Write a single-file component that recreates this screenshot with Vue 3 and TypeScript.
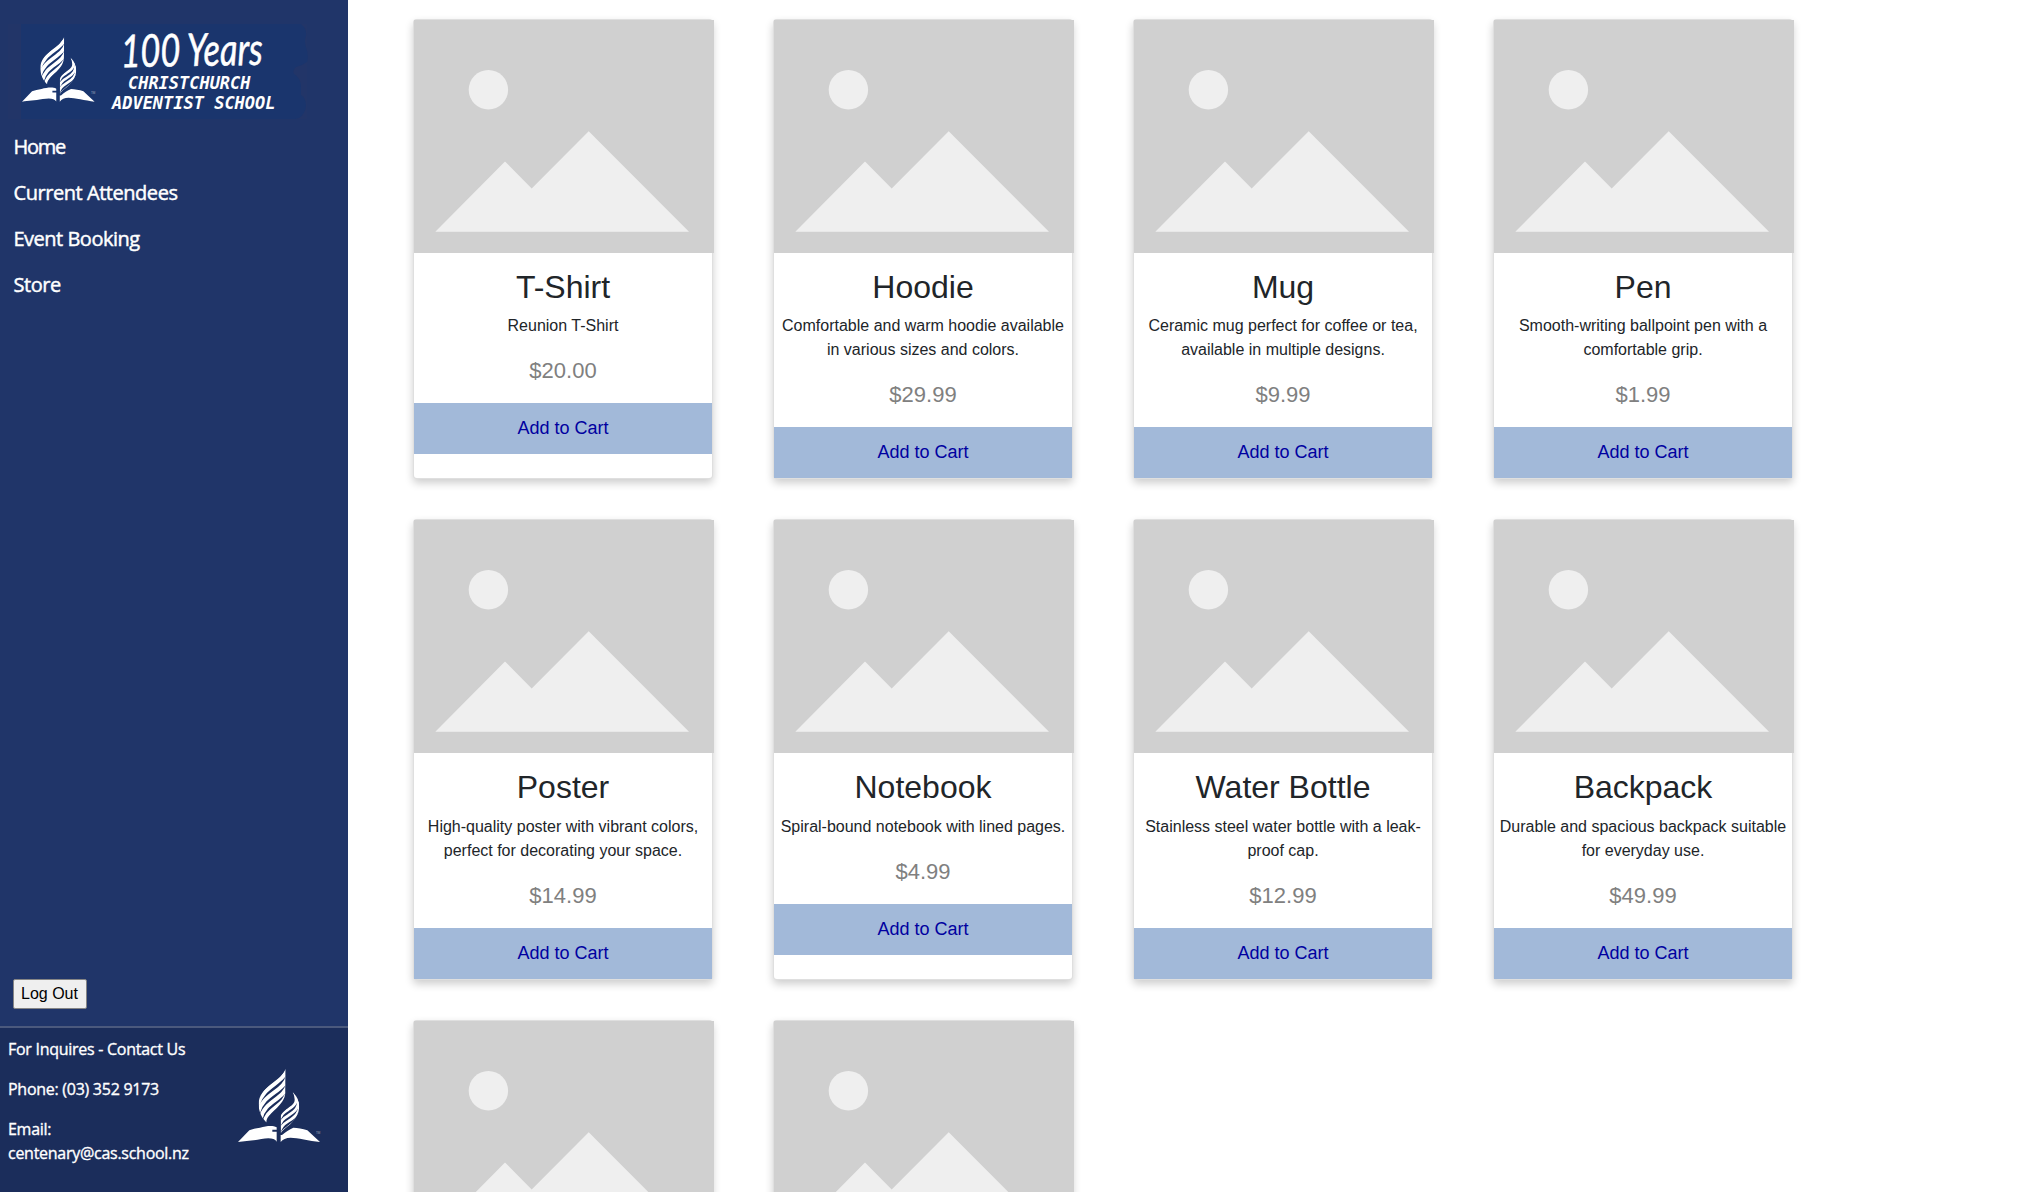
<script setup lang="ts">
interface Product {
  name: string
  description: string
  price: string
}

const links: { label: string; spacing: string }[] = [
  { label: 'Home', spacing: '-1.3px' },
  { label: 'Current Attendees', spacing: '-0.45px' },
  { label: 'Event Booking', spacing: '-0.5px' },
  { label: 'Store', spacing: '-0.45px' },
]

const products: Product[] = [
  { name: 'T-Shirt', description: 'Reunion T-Shirt', price: '$20.00' },
  { name: 'Hoodie', description: 'Comfortable and warm hoodie available in various sizes and colors.', price: '$29.99' },
  { name: 'Mug', description: 'Ceramic mug perfect for coffee or tea, available in multiple designs.', price: '$9.99' },
  { name: 'Pen', description: 'Smooth-writing ballpoint pen with a comfortable grip.', price: '$1.99' },
  { name: 'Poster', description: 'High-quality poster with vibrant colors, perfect for decorating your space.', price: '$14.99' },
  { name: 'Notebook', description: 'Spiral-bound notebook with lined pages.', price: '$4.99' },
  { name: 'Water Bottle', description: 'Stainless steel water bottle with a leak-proof cap.', price: '$12.99' },
  { name: 'Backpack', description: 'Durable and spacious backpack suitable for everyday use.', price: '$49.99' },
  { name: '', description: '', price: '' },
  { name: '', description: '', price: '' },
]
</script>

<template>
  <div class="page">
    <svg width="0" height="0" class="defs" aria-hidden="true">
      <clipPath id="flame-left">
        <path d="M161 14C152 44 80 68 80 120C80 145 90 162 104 176C98 150 160 128 160 84Z" />
      </clipPath>
      <clipPath id="flame-right">
        <path d="M182 84C206 108 206 136 192 160C180 182 156 192 146 208V158C150 135 198 125 182 84Z" />
      </clipPath>
      <symbol id="emblem" viewBox="0 0 288 252">
        <g fill="none" stroke="#fff" stroke-width="12" clip-path="url(#flame-left)">
          <path d="M165 12C156 60 96 60 76 124" />
          <path d="M168 34C156 86 96 84 78 146" />
          <path d="M168 59C156 110 98 108 86 164" />
          <path d="M168 82C156 132 98 132 96 186" />
        </g>
        <g fill="none" stroke="#fff" stroke-width="8.5" clip-path="url(#flame-right)">
          <path d="M184 80C204 116 184 127 168 137C152 146 148 153 140 172" />
          <path d="M196 92C208 132 184 145 168 155C152 164 148 171 140 190" />
          <path d="M202 112C208 148 184 162 168 172C152 182 148 188 140 207" />
          <path d="M206 132C204 166 184 178 168 190C154 200 150 204 143 220" />
        </g>
        <g fill="#fff">
          <path d="M18 234L52 199Q66 193 84 191C104 186 122 184 134 190V197H121V203H134V233C128 222 110 221 88 225C60 231 40 230 18 234Z" />
          <path d="M146 234V213H150C160 204 172 196 184 191C196 191 212 194 226 199L264 234C232 231 196 221 176 221C162 221 152 226 146 234Z" />
        </g>
      </symbol>
    </svg>

    <aside class="sidebar">
      <svg class="brand" width="308" height="104" viewBox="0 20 308 104">
        <path fill="#223568" d="M8 24H21V119H8Z" />
        <path fill="#223568" d="M290 24H307V119H290Z" />
        <path fill="#1a356d" d="M21 24H301Q307 29 306 36Q304 41 306 47Q309 56 307 62Q303 65 296 67Q292 70 294 74Q301 78 301 87V95Q306 98 306 106Q305 114 299 118L295 119H21Z" />
        <use href="#emblem" x="16.7" y="32.6" width="85" height="74.4" />
        <text class="trademark" x="91" y="94.3">TM</text>
        <text class="script" x="121" y="66" textLength="142" lengthAdjust="spacingAndGlyphs" transform="rotate(-1 190 66)">100 Years</text>
        <g class="mono" fill="#fff">
          <text x="128" y="88.5" textLength="122.5" lengthAdjust="spacingAndGlyphs">CHRISTCHURCH</text>
          <text x="112" y="109" textLength="163.5" lengthAdjust="spacingAndGlyphs">ADVENTIST SCHOOL</text>
        </g>
      </svg>

      <nav class="nav">
        <a v-for="link in links" :key="link.label" class="nav-link" :style="{ letterSpacing: link.spacing }">{{ link.label }}</a>
      </nav>

      <button class="logout" type="button">Log Out</button>

      <footer class="contact">
        <div class="contact-text">
          <p>For Inquires - Contact Us</p>
          <p>Phone: (03) 352 9173</p>
          <p>Email:<br />centenary@cas.school.nz</p>
        </div>
        <svg class="contact-logo" width="96" height="84">
          <use href="#emblem" width="96" height="84" />
          <text class="trademark" x="84" y="69.6">TM</text>
        </svg>
      </footer>
    </aside>

    <main class="store">
      <article v-for="(product, index) in products" :key="index" class="card">
        <svg class="photo" width="300" height="233" viewBox="0 0 300 233">
          <path fill="#d0d0d0" d="M0 0H300V233H0Z" />
          <circle cx="74.4" cy="69.8" r="19.7" fill="#efefef" />
          <path fill="#efefef" d="M21.3 211.8L91 141.6L117.7 168.4L174.7 111.2L275 211.8Z" />
        </svg>
        <template v-if="product.name">
          <h2>{{ product.name }}</h2>
          <p class="description">{{ product.description }}</p>
          <p class="price">{{ product.price }}</p>
          <button class="add" type="button">Add to Cart</button>
        </template>
      </article>
    </main>
  </div>
</template>

<style>
body {
  margin: 0;
  background: #fff;
}
</style>

<style scoped>
* {
  box-sizing: border-box;
}

.page {
  display: flex;
  height: 1192px;
  overflow: hidden;
  font-family: "Liberation Sans", Arial, sans-serif;
  font-size: 16px;
  line-height: 24px;
  color: #212529;
}

.defs {
  position: absolute;
}

.sidebar {
  display: flex;
  flex-direction: column;
  flex: none;
  width: 348px;
  height: 1192px;
  padding-top: 20px;
  background: #203569;
  color: #fff;
  font-family: "Open Sans", "Noto Sans", sans-serif;
}

.brand {
  display: block;
  flex: none;
}

.script {
  fill: #fff;
  stroke: #fff;
  stroke-width: 0.6px;
  font: italic 400 45px Lato, sans-serif;
}

.mono {
  font: italic 700 17px "DejaVu Sans Mono", monospace;
}

.trademark {
  fill: #fff;
  opacity: 0.5;
  font: 3px "Liberation Sans", Arial, sans-serif;
  letter-spacing: 0;
}

.nav {
  display: flex;
  flex-direction: column;
}

.nav-link {
  height: 46px;
  padding-left: 13.5px;
  font-size: 20px;
  line-height: 46px;
  white-space: nowrap;
  -webkit-text-stroke: 0.45px #fff;
}

.logout {
  width: 74px;
  height: 30px;
  margin: auto 0 17px 13px;
  padding: 0 1px 0 0;
  border: 1px solid #858585;
  border-radius: 2px;
  background: #efefef;
  color: #000;
  font: 16px/28px "Liberation Sans", Arial, sans-serif;
}

.contact {
  display: flex;
  flex: none;
  height: 166px;
  padding: 9px 0 0 8px;
  border-top: 2px solid #4b597d;
  background: #1b2d5b;
  letter-spacing: -0.27px;
  -webkit-text-stroke: 0.35px #fff;
}

.contact-text {
  width: 224px;
  white-space: nowrap;
}

.contact p {
  margin: 0 0 16px;
}

.contact-logo {
  margin-top: 27px;
  -webkit-text-stroke: 0;
}

.store {
  display: grid;
  grid-template-columns: repeat(4, 300px);
  align-content: start;
  gap: 40px 60px;
  padding: 19px 0 0 65px;
}

.card {
  height: 460.4px;
  border: 1px solid rgba(0, 0, 0, 0.125);
  border-radius: 4px;
  background: #fff;
  box-shadow: 0 4px 8px 0 rgba(0, 0, 0, 0.2);
  text-align: center;
}

.photo {
  display: block;
  width: 300px;
  height: 233px;
}

h2 {
  margin: 15px 0 8px;
  font-size: 32px;
  font-weight: 400;
  line-height: 38.4px;
}

.description {
  margin: 0 0 16px;
}

.price {
  margin: 0 0 16px;
  color: #808080;
  font-size: 22px;
  line-height: 33px;
}

.add {
  display: block;
  width: 100%;
  height: 51px;
  padding: 12px;
  border: 0;
  background: #a2b9d9;
  color: #0000a0;
  font: 18px/27px "Liberation Sans", Arial, sans-serif;
}
</style>
